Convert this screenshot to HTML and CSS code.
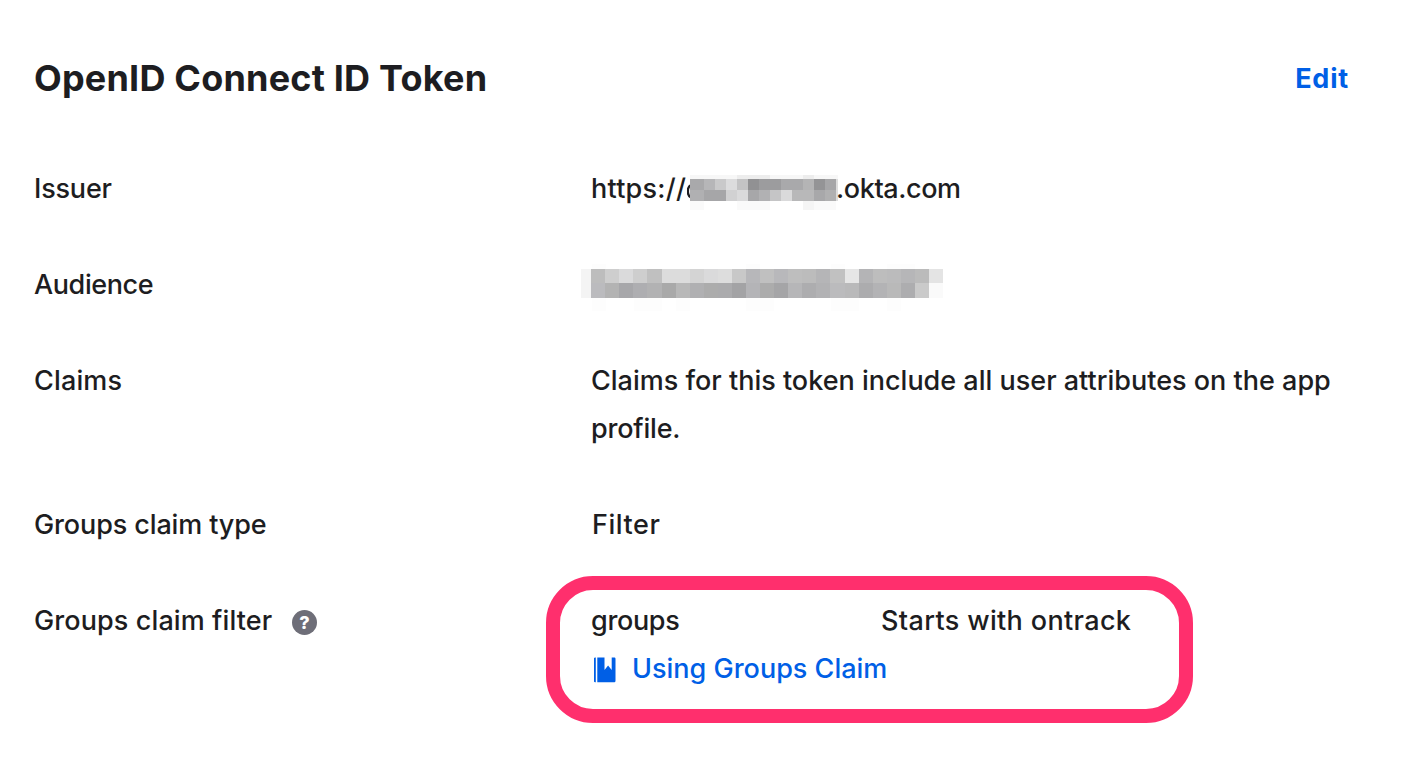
FILE: index.html
```html
<!DOCTYPE html>
<html lang="en">
<head>
<meta charset="utf-8">
<title>OpenID Connect ID Token</title>
<link rel="stylesheet" href="styles.css">
</head>
<body>
<main class="panel">
  <header class="panel-header">
    <h1 class="title"><span>OpenID Connect ID Token</span></h1>
    <a class="edit"><span>Edit</span></a>
  </header>
  <dl class="fields">
    <dt><span class="t-issuer">Issuer</span></dt>
    <dd class="issuer"><span class="t-https">https://</span><svg class="mask-issuer" width="151" height="36" viewBox="-3 0 151 36">
      <path d="M1 10C-3.200 12-3.200 20.500 1 22.500" fill="none" stroke="#1d1d21" stroke-width="2.400"/>
      <g shape-rendering="crispEdges">
      <g fill="#f7f7f7"><path d="M0 0h47v4H0zM80 0h33v4H80z"/><path fill="#ededed" d="M47 0h33v4H47zM113 0h11v4h-11z"/><path d="M124 0h24v4h-24z"/></g>
      <g fill="#fafafa"><path d="M0 26h14v9H0zM47 26h33v9H47zM124 26h22v9h-22z"/><path fill="#f5f5f5" d="M113 26h11v9h-11z"/></g>
      <path fill="#a9a9ab" d="M0 4h14v11H0z"/><path fill="#b6b6b8" d="M14 4h11v11H14z"/><path fill="#c9c9ca" d="M25 4h11v11H25z"/><path fill="#dcdcdd" d="M36 4h11v11H36z"/><path fill="#c3c3c4" d="M47 4h11v11H47z"/><path fill="#919193" d="M58 4h11v11H58z"/><path fill="#9c9c9e" d="M69 4h22v11H69z"/><path fill="#a9a9ab" d="M91 4h22v11H91z"/><path fill="#b4b4b5" d="M113 4h11v11h-11z"/><path fill="#949496" d="M124 4h11v11h-11z"/><path fill="#a6a6a8" d="M135 4h11v11h-11z"/>
      <path fill="#b0b0b2" d="M0 15h14v11H0z"/><path fill="#a6a6a8" d="M14 15h22v11H14z"/><path fill="#d1d1d2" d="M36 15h11v11H36z"/><path fill="#dadadb" d="M47 15h11v11H47z"/><path fill="#a7a7a9" d="M58 15h11v11H58z"/><path fill="#b1b1b3" d="M69 15h11v11H69z"/><path fill="#c5c5c6" d="M80 15h11v11H80z"/><path fill="#dadadb" d="M91 15h11v11H91z"/><path fill="#b8b8b9" d="M102 15h22v11h-22z"/><path fill="#a8a8aa" d="M124 15h11v11h-11z"/><path fill="#b0b0b1" d="M135 15h11v11h-11z"/><path fill="#dddddd" d="M146 4h2v22h-2z"/>
      </g>
    </svg><span class="t-okta">.okta.com</span></dd>

    <dt><span class="t-audience">Audience</span></dt>
    <dd class="audience"><svg class="mask-audience" width="363" height="50" viewBox="0 0 363 50" shape-rendering="crispEdges">
      <path fill="#fdfdfd" d="M11 3h14v5H11zM165 3h14v5h-14zM250 3h14v5h-14zM306 3h28v5h-28zM11 37h14v13H11zM53 37h28v13H53zM95 37h14v13H95zM165 37h28v13h-28zM250 37h28v13h-28zM306 37h14v13h-14z"/>
      <path fill="#f4f4f4" d="M0 8h10v29H0z"/>
      <path fill="#bdbdbd" d="M10 8h14v14H10z"/><path fill="#cecece" d="M24 8h14v14H24z"/><path fill="#dadadb" d="M38 8h14v14H38z"/><path fill="#cecece" d="M52 8h14v14H52z"/><path fill="#c0c0c0" d="M66 8h15v14H66z"/><path fill="#dcdcdc" d="M81 8h28v14H81z"/><path fill="#d4d4d4" d="M109 8h14v14h-14z"/><path fill="#dadadb" d="M123 8h14v14h-14z"/><path fill="#dddddd" d="M137 8h14v14h-14z"/><path fill="#c8c8c8" d="M151 8h14v14h-14z"/><path fill="#b7b7ba" d="M165 8h14v14h-14z"/><path fill="#c0c0c0" d="M179 8h14v14h-14z"/><path fill="#b8b8bb" d="M193 8h14v14h-14z"/><path fill="#bebebe" d="M207 8h14v14h-14z"/><path fill="#bcbcbc" d="M221 8h14v14h-14z"/><path fill="#b5b5b7" d="M235 8h14v14h-14z"/><path fill="#c1c1c1" d="M249 8h15v14h-15z"/><path fill="#e6e6e6" d="M264 8h14v14h-14z"/><path fill="#b4b4b6" d="M278 8h14v14h-14z"/><path fill="#bdbdbd" d="M292 8h14v14h-14z"/><path fill="#bbbbbc" d="M306 8h14v14h-14z"/><path fill="#b6b6b8" d="M320 8h14v14h-14z"/><path fill="#bbb" d="M334 8h14v14h-14z"/><path fill="#e4e4e4" d="M348 8h14v14h-14z"/>
      <path fill="#bbbbbe" d="M10 22h14v15H10z"/><path fill="#b3b3b3" d="M24 22h14v15H24z"/><path fill="#a7a7aa" d="M38 22h14v15H38z"/><path fill="#aeaeb1" d="M52 22h14v15H52z"/><path fill="#b2b2b3" d="M66 22h15v15H66z"/><path fill="#a9a9a9" d="M81 22h14v15H81z"/><path fill="#b8b8b8" d="M95 22h14v15H95z"/><path fill="#b0b0b2" d="M109 22h14v15h-14z"/><path fill="#acacac" d="M123 22h14v15h-14z"/><path fill="#ababad" d="M137 22h14v15h-14z"/><path fill="#a3a3a5" d="M151 22h14v15h-14z"/><path fill="#b4b4b7" d="M165 22h14v15h-14z"/><path fill="#acacac" d="M179 22h14v15h-14z"/><path fill="#a5a5a7" d="M193 22h14v15h-14z"/><path fill="#b6b6b8" d="M207 22h14v15h-14z"/><path fill="#adadaf" d="M221 22h14v15h-14z"/><path fill="#b2b2b4" d="M235 22h14v15h-14z"/><path fill="#bbbbbd" d="M249 22h15v15h-15z"/><path fill="#b9b9ba" d="M264 22h14v15h-14z"/><path fill="#acacae" d="M278 22h14v15h-14z"/><path fill="#b3b3b5" d="M292 22h14v15h-14z"/><path fill="#b9b9b9" d="M306 22h14v15h-14z"/><path fill="#adadaf" d="M320 22h14v15h-14z"/><path fill="#cacaca" d="M334 22h14v15h-14z"/><path fill="#fafafa" d="M348 22h14v15h-14z"/>
    </svg></dd>

    <dt><span class="t-claims">Claims</span></dt>
    <dd><span class="t-desc">Claims for this token include all user attributes on the app</span><br><span class="t-profile">profile.</span></dd>

    <dt><span class="t-type">Groups claim type</span></dt>
    <dd><span class="t-filter">Filter</span></dd>

    <dt class="with-help"><span class="t-gfilter">Groups claim filter</span><span class="help">?</span></dt>
    <dd class="claim">
      <div class="claim-row"><span class="claim-name"><span class="t-groups">groups</span></span><span class="t-starts">Starts with ontrack</span></div>
      <a class="doc-link"><svg class="book" width="22" height="26" viewBox="0 0 22 26"><path fill="#005fe6" d="M0 1.3C0 .6.6.5 1.8.5v24.7C.6 25.200 0 25 0 24.500zM3.300.5h7.200v12.600l3.600-4.700 3.600 4.700V.5h2.300c1 0 1.500.5 1.500 1.400v21.800c0 1-.6 1.500-1.600 1.500H3.300z"/></svg><span class="t-using">Using Groups Claim</span></a>
      <div class="highlight"></div>
    </dd>
  </dl>
</main>
</body>
</html>
```
FILE: styles.css
```css
* { box-sizing: border-box; }
body {
  margin: 0;
  background: #fff;
  color: #1d1d21;
  font: 450 27px/48px Inter, "Liberation Sans", sans-serif;
  white-space: nowrap;
}
.panel { height: 780px; padding: 54px 60px 0 34px; overflow: hidden; }
.panel-header { display: flex; justify-content: space-between; height: 111px; }
.title { margin: 0; font-size: 36px; font-weight: 650; line-height: 48px; letter-spacing: .2px; }
.edit { margin-right: -1px; padding-top: 1px; color: #005fe6; font-weight: 650; letter-spacing: .8px; }
.fields { display: grid; grid-template-columns: 557px 1fr; row-gap: 48px; margin: 0; }
dd { margin: 0; }
.issuer { display: flex; }
.t-issuer { letter-spacing: -.2px; }
.t-https { width: 96px; letter-spacing: .25px; }
.t-okta { margin-left: -2px; letter-spacing: -.4px; }
.t-audience { letter-spacing: -.4px; }
.t-claims { letter-spacing: .15px; }
.t-profile { letter-spacing: -.2px; }
.t-type { letter-spacing: -.12px; }
.t-filter { margin-left: 1px; letter-spacing: .55px; }
.t-gfilter { letter-spacing: .1px; }
.t-groups { letter-spacing: -.35px; }
.t-starts { margin-left: 1px; letter-spacing: .35px; }
.mask-issuer { flex: none; margin-top: 10px; }
.mask-audience { display: block; margin: 0 0 -2px -10px; }
.with-help { display: flex; align-items: flex-start; }
.t-gfilter { width: 258px; }
.help {
  width: 25px; height: 25px; margin-top: 13px; border-radius: 50%;
  background: #6e6e78; color: #fff; text-align: center;
  font: 800 18px/25px Inter, sans-serif;
}
.claim { position: relative; }
.claim-row { display: flex; }
.claim-name { width: 289px; }
.doc-link { display: flex; gap: 16px; color: #005fe6; }
.book { flex: none; margin: 12px 0 0 3px; }
.highlight {
  position: absolute; left: -45px; top: -21px; width: 647px; height: 147px;
  border: 14px solid #ff2f6d; border-radius: 47px;
}
```
